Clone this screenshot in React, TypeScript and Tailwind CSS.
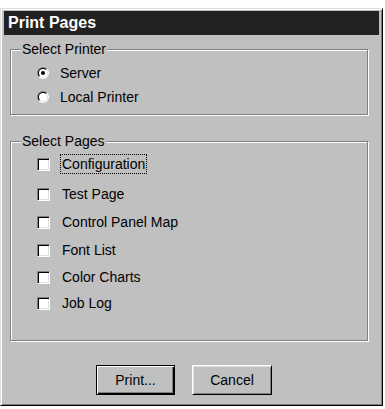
import React from "react";

function Radio({ checked }: { checked?: boolean }) {
  return (
    <svg width="12" height="12" viewBox="0 0 12 12" className="shrink-0">
      <path d="M1.757 10.243 A6 6 0 0 1 10.243 1.757 Z" fill="#808080" />
      <path d="M10.243 1.757 A6 6 0 0 1 1.757 10.243 Z" fill="#ffffff" />
      <path d="M2.464 9.536 A5 5 0 0 1 9.536 2.464 Z" fill="#000000" />
      <path d="M9.536 2.464 A5 5 0 0 1 2.464 9.536 Z" fill="#dfdfdf" />
      <circle cx="6" cy="6" r="4" fill="#ffffff" />
      {checked && <circle cx="6" cy="6" r="2" fill="#000000" />}
    </svg>
  );
}

function Check() {
  return (
    <div className="w-[13px] h-[13px] shrink-0 bg-white border border-t-[#808080] border-l-[#808080] border-r-white border-b-white shadow-[inset_1px_1px_0_#000,inset_-1px_-1px_0_#dfdfdf]" />
  );
}

function CheckRow({ label, cls, focus }: { label: string; cls: string; focus?: boolean }) {
  return (
    <div className={`flex items-center h-[20px] ${cls}`}>
      <Check />
      <div
        className={`ml-[10px] h-[20px] pl-[1px] pr-[1px] flex items-center leading-[18px] border ${
          focus ? "border-dotted border-black" : "border-transparent"
        }`}
      >
        {label}
      </div>
    </div>
  );
}

export default function App() {
  return (
    <div
      className="w-[385px] h-[409px] bg-white pt-[8px] text-[14px] text-black"
      style={{ fontFamily: '"Liberation Sans", Arial, sans-serif' }}
    >
      <div className="w-[383px] h-[398px] bg-[#c0c0c0] border border-t-[#dfdfdf] border-l-[#dfdfdf] border-r-black border-b-black shadow-[inset_1px_1px_0_#fff,inset_-1px_-1px_0_#808080] px-[3px] pt-[2px]">
        <div className="h-[24px] bg-[#222222] flex items-center pl-[4px] text-white font-bold text-[16px] leading-[20px]">
          Print Pages
        </div>

        <fieldset className="mt-[6px] ml-[6px] w-[358px] border border-[#808080] shadow-[inset_1px_1px_0_#fff,1px_1px_0_#fff] pb-[5px]">
          <legend className="ml-[10px] px-[1px] leading-[16px] bg-[#c0c0c0]">Select Printer</legend>
          <div className="pt-[4px] pl-[26px]">
            <div className="flex items-center h-[24px]">
              <Radio checked />
              <span className="ml-[11px]">Server</span>
            </div>
            <div className="flex items-center h-[24px]">
              <Radio />
              <span className="ml-[11px]">Local Printer</span>
            </div>
          </div>
        </fieldset>

        <fieldset className="mt-[18px] ml-[6px] w-[358px] border border-[#808080] shadow-[inset_1px_1px_0_#fff,1px_1px_0_#fff] pb-[27px]">
          <legend className="ml-[10px] px-[1px] leading-[16px] bg-[#c0c0c0]">Select Pages</legend>
          <div className="pt-[5px] pl-[26px]">
            <CheckRow label="Configuration" cls="mt-0" focus />
            <CheckRow label="Test Page" cls="mt-[10px]" />
            <CheckRow label="Control Panel Map" cls="mt-[8px]" />
            <CheckRow label="Font List" cls="mt-[8px]" />
            <CheckRow label="Color Charts" cls="mt-[7px]" />
            <CheckRow label="Job Log" cls="mt-[6px]" />
          </div>
        </fieldset>

        <div className="flex mt-[24px] pl-[92px] gap-[17px]">
          <button className="w-[79px] h-[30px] bg-[#c0c0c0] border border-black shadow-[inset_1px_1px_0_#fff,inset_-1px_-1px_0_#000,inset_-2px_-2px_0_#808080] flex items-center justify-center leading-[16px]">
            Print...
          </button>
          <button className="w-[80px] h-[30px] bg-[#c0c0c0] border border-t-white border-l-white border-r-black border-b-black shadow-[inset_1px_1px_0_#dfdfdf,inset_-1px_-1px_0_#808080] flex items-center justify-center leading-[16px]">
            Cancel
          </button>
        </div>
      </div>
    </div>
  );
}
